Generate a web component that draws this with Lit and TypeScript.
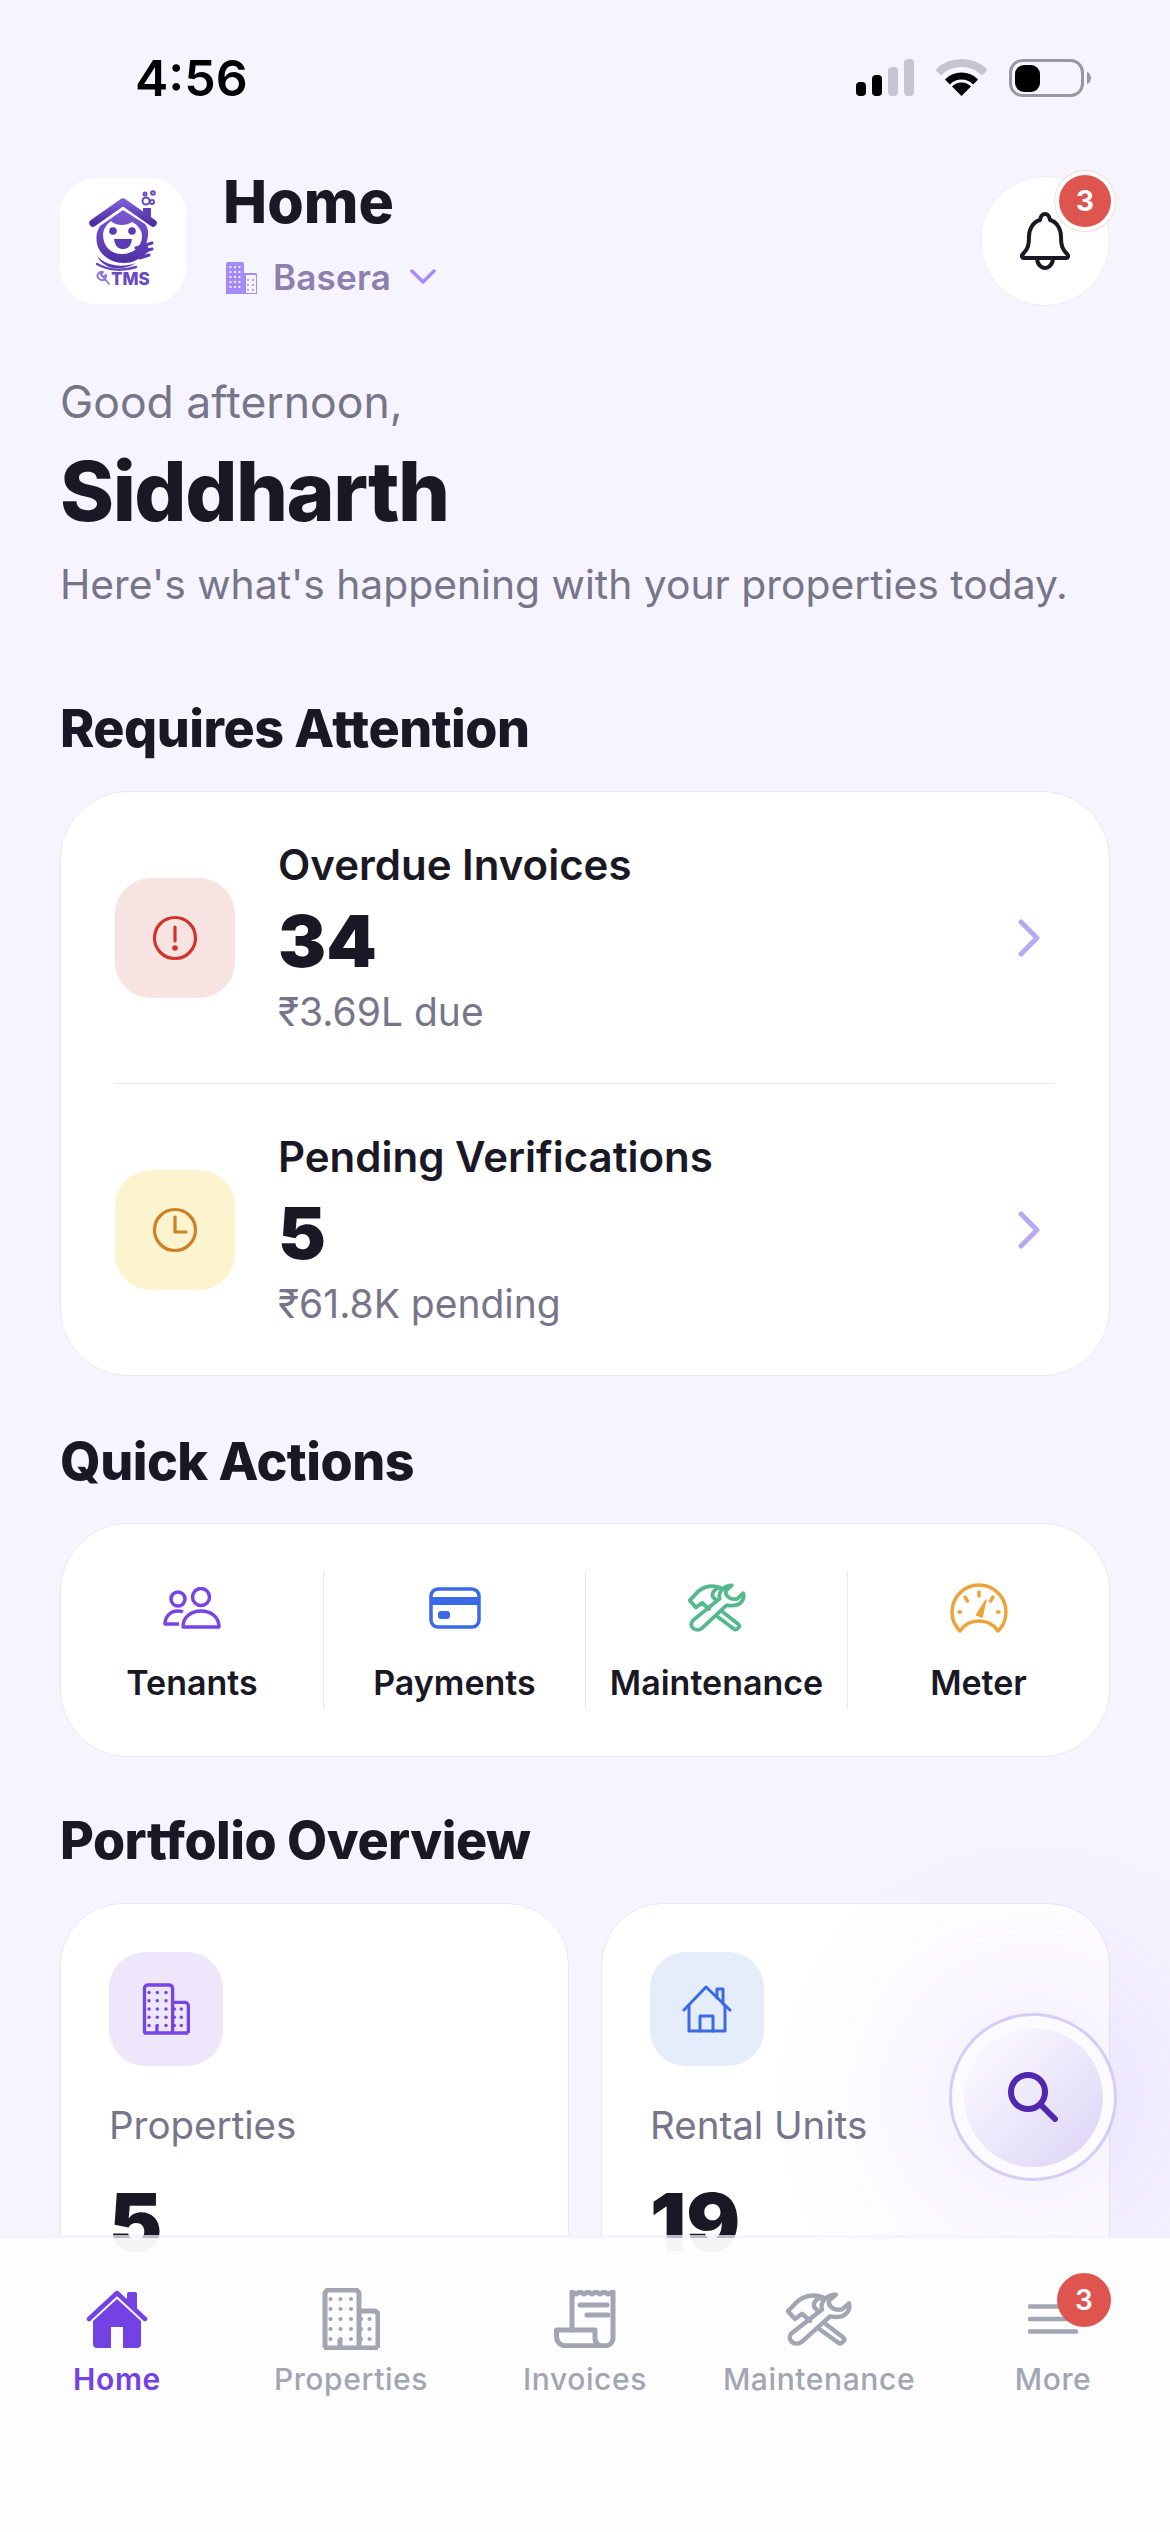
import { LitElement, html, css, svg } from "lit";
import { customElement } from "lit/decorators.js";

const buildingDots = (xs: number[], ys: number[]) =>
  ys.flatMap((y) => xs.map((x) => svg`<circle cx=${x} cy=${y} r="2.100" fill="currentColor" stroke="none"></circle>`));

const buildingIcon = (w: number, h: number, sw = 5) => html`<svg width=${w} height=${h} viewBox="0 0 58 62" fill="none" stroke="currentColor" stroke-width=${sw} stroke-linejoin="round">
  <path d="M3 60V6a4 4 0 0 1 4-4h26a4 4 0 0 1 4 4v54"></path>
  <path d="M37 23h15a4 4 0 0 1 4 4v33"></path>
  <path d="M2 60h54"></path><path d="M18 51v9"></path>
  ${buildingDots([8.5, 18.5, 29], [11, 21, 31, 41, 51])}
  ${buildingDots([39, 47.5], [31, 41, 51])}
</svg>`;

const toolsIcon = (w: number, h: number, sw = 4.2) => html`<svg width=${w} height=${h} viewBox="0 0 66 62" preserveAspectRatio="none" fill="none" stroke="currentColor" stroke-linejoin="round" stroke-linecap="round">
  <g stroke-width=${sw}>
  <path vector-effect="non-scaling-stroke" d="M36 20C34 12 40 3 50 3L43 10C42 16 48 22 56 20L63 13C65 24 57 31 44 28L16 57C13 60 8 60 5.500 57C3 54 3 50 6 47Z"></path>
  <path vector-effect="non-scaling-stroke" d="M40 37L57 52C59 54 59 55 57 57C55 59 54 60 52 58L34 43"></path>
  <path vector-effect="non-scaling-stroke" d="M24 33L16 25L9 31L2 22L8 15C14 6 25 1 37 6C31 7 27 11 28 17L32 22"></path>
  </g>
</svg>`;

const chevron = html`<svg class="chev" width="26" height="40" viewBox="0 0 26 40" fill="none" stroke="#b9a9f2" stroke-width="5" stroke-linecap="round" stroke-linejoin="round"><path d="M5 4L21 20L5 36"></path></svg>`;

const logo = html`<svg width="126" height="126" viewBox="0 0 126 126">
  <defs><linearGradient id="lg" x1="0" y1="0" x2="0" y2="1"><stop offset="0" stop-color="#7d5bd6"></stop><stop offset="1" stop-color="#4f2ea3"></stop></linearGradient></defs>
  <path d="M83 42V30h8v16z" fill="#6240b8"></path>
  <g fill="none" stroke="#6a48c0" stroke-width="2"><circle cx="86" cy="23" r="3.500"></circle><circle cx="93" cy="15" r="1.800"></circle><circle cx="85" cy="16" r="1.500"></circle><circle cx="92" cy="24" r="2"></circle></g>
  <path d="M33 45L63 24L93 45" fill="none" stroke="url(#lg)" stroke-width="7.500" stroke-linecap="round" stroke-linejoin="round"></path>
  <path d="M63 32L40 48C36 54 36 60 37 66C40 78 52 85 64 85C74 85 82 80 90 72L86 66C88 60 90 52 85 46Z" fill="url(#lg)"></path>
  <path d="M43 56C44 50 47 46 51 43C56 48 66 48 72 44C78 47 82 52 82 58C82 68 74 76 62 76C50 76 43 68 43 56Z" fill="#fff"></path>
  <circle cx="53" cy="53" r="3.800" fill="#5b3ab3"></circle><circle cx="72" cy="53" r="3.800" fill="#5b3ab3"></circle>
  <path d="M54 61H72C71 69 67 71 63 71C59 71 55 69 54 61Z" fill="#5b3ab3"></path>
  <path d="M76 70L92 65M78 75L92 71M80 80L89 77" stroke="#5b3ab3" stroke-width="3" stroke-linecap="round"></path>
  <path d="M37 78C46 88 62 90 76 85C62 94 44 92 37 78Z" fill="#5b3ab3"></path>
  <path d="M37 86C49 93 64 93 76 89" stroke="#6a48c0" stroke-width="2.500" fill="none" stroke-linecap="round"></path>
  <path d="M40 95L49 106M38 100C36 96 40 93 43 94L41 97L43 99L46 97C47 100 44 103 41 102Z" fill="none" stroke="#8f74d8" stroke-width="1.800" stroke-linecap="round"></path>
  <text x="51" y="107" font-family="Inter, sans-serif" font-weight="800" font-size="17" fill="#6a48c0">TMS</text>
</svg>`;

@customElement("app-root")
export class AppRoot extends LitElement {
  static styles = css`
    :host { display: block; position: relative; width: 1170px; height: 2532px; overflow: hidden; background: #f6f4ff; color: #1a1825; font-family: Inter, "Noto Sans", sans-serif; }
    .status { display: flex; justify-content: space-between; align-items: flex-start; height: 125px; padding: 48px 79px 0 135px; }
    .time { font-size: 50px; line-height: 60px; font-weight: 600; color: #000; }
    .status-icons { display: flex; gap: 22px; margin-top: 11px; }
    .status-icons svg { display: block; }
    main { padding: 0 60px; }
    .header { display: flex; align-items: flex-start; }
    .logo { width: 126px; height: 126px; margin-top: 5px; border-radius: 36px; background: #fff; flex: none; }
    .logo svg { display: block; }
    .titles { margin-left: 39px; flex: 1; }
    h1 { margin: 0 0 0 -2px; font-size: 59px; line-height: 58px; font-weight: 800; letter-spacing: 0; }
    .site { display: flex; align-items: center; margin-top: 25px; height: 42px; color: #8e80ad; font-size: 35px; font-weight: 600; letter-spacing: 0.2px; }
    .site .bld { color: #a58bf7; margin-right: 16px; }
    .site .dn { margin-left: 19px; }
    .bell { position: relative; width: 130px; height: 130px; margin-top: 3px; border-radius: 50%; background: #fff; border: 1px solid #eeecf6; box-sizing: border-box; display: flex; align-items: center; justify-content: center; flex: none; }
    .badge { position: absolute; width: 52px; height: 52px; border-radius: 50%; background: #de5550; color: #fff; font-weight: 700; font-size: 28px; display: flex; align-items: center; justify-content: center; }
    .bell .badge { left: 78px; top: -2px; box-shadow: 0 0 0 4px #fff, 0 0 0 5px #f5dcdc; }
    .hello { margin: 71px 0 0; font-size: 44.5px; line-height: 50px; color: #77758a; }
    .name { margin: 15px 0 0; font-size: 82px; line-height: 100px; font-weight: 800; letter-spacing: -1.5px; }
    .lead { margin: 18px 0 0; font-size: 40.8px; line-height: 48px; color: #77758a; }
    h2 { margin: 0; font-size: 52px; line-height: 60px; font-weight: 800; letter-spacing: -0.5px; font-feature-settings: "calt" 0; }
    .h-req { margin-top: 91px; }
    .h-quick { margin-top: 56px; }
    .h-port { margin-top: 54px; }
    .card { background: #fff; border: 1px solid #e9e7f5; border-radius: 68px; box-sizing: border-box; }
    .attn { margin-top: 32px; height: 585px; display: flex; flex-direction: column; }
    .row { flex: 1; display: flex; align-items: center; margin: 0 54px; }
    .row:first-child { flex: 0 0 291px; }
    .row + .row { border-top: 1px solid #e9e8f0; }
    .tile { width: 120px; height: 120px; border-radius: 36px; display: flex; align-items: center; justify-content: center; flex: none; }
    .red { background: #f8e3e3; } .yellow { background: #fcf3cf; }
    .txt { flex: 1; margin-left: 43px; }
    .txt .t { font-size: 42px; line-height: 50px; font-weight: 600; }
    .num { font-size: 72px; line-height: 72px; font-weight: 900; }
    .txt .num { margin-top: 15px; }
    .txt .s { margin-top: 12px; font-size: 39px; line-height: 46px; color: #77758a; }
    .chev { margin-right: 13px; display: block; }
    .quick { margin-top: 31px; height: 234px; padding: 47px 0 0; display: grid; grid-template-columns: repeat(4, 1fr); }
    .cell { height: 138px; box-sizing: border-box; padding-top: 12px; display: flex; flex-direction: column; align-items: center; }
    .cell + .cell { border-left: 1px solid #e9e8f0; }
    .cell .ic { height: 49px; display: flex; align-items: center; justify-content: center; }
    .cell .ic.green { color: #55b98d; }
    .cell .ic svg { display: block; }
    .cell .l { margin-top: 31px; font-size: 34px; line-height: 40px; font-weight: 600; white-space: nowrap; }
    .port { margin-top: 32px; display: grid; grid-template-columns: 1fr 1fr; gap: 32px; }
    .stat { height: 600px; border-radius: 62px; padding: 48px; }
    .stile { width: 114px; height: 114px; border-radius: 36px; display: flex; align-items: center; justify-content: center; }
    .purple { background: #eee6fa; color: #7744e6; } .blue { background: #e5edfa; }
    .stat .l { margin-top: 36px; font-size: 38.5px; line-height: 46px; color: #77758a; }
    .stat .num { margin-top: 38px; font-size: 80px; }
    .fab { position: absolute; left: 949px; top: 2013px; width: 168px; height: 168px; padding: 0; box-sizing: border-box; border-radius: 50%; border: 3px solid #d6cdf6; background: #fbfaff; display: flex; align-items: center; justify-content: center; box-shadow: 0 0 150px 60px rgba(124, 82, 240, 0.09); }
    .fab .in { width: 139px; height: 139px; border-radius: 50%; background: linear-gradient(135deg, #f7f5fe 20%, #dcd3f6 100%); display: flex; align-items: center; justify-content: center; }
    .tabs { position: absolute; left: 0; right: 0; bottom: 0; height: 297px; box-sizing: border-box; border-top: 3px solid rgba(242, 239, 253, 0.75); background: rgba(253, 253, 254, 0.96); background-clip: padding-box; padding-top: 50px; display: grid; grid-template-columns: repeat(5, 1fr); align-items: start; }
    .tab { position: relative; display: flex; flex-direction: column; align-items: center; color: #a1a6b2; }
    .tab .ic { height: 62px; display: flex; align-items: center; justify-content: center; }
    .tab .ic svg { display: block; }
    .tab .l { margin-top: 11px; font-size: 30px; line-height: 36px; font-weight: 500; letter-spacing: 0.6px; }
    .tab.on { color: #7341e4; }
    .tab.on .l { font-weight: 600; }
    .tab .badge { left: 121px; top: -15px; width: 54px; height: 54px; font-size: 28px; font-weight: 600; }
  `;

  render() {
    return html`
      <div class="status">
        <span class="time">4:56</span>
        <div class="status-icons">
          <svg width="58" height="37" viewBox="0 0 58 37"><rect x="0" y="23" width="10" height="14" rx="4" fill="#000"></rect><rect x="16" y="16" width="10" height="21" rx="4" fill="#000"></rect><rect x="32" y="8" width="10" height="29" rx="4" fill="#c6c4d0"></rect><rect x="48" y="0" width="10" height="37" rx="4" fill="#c6c4d0"></rect></svg>
          <svg width="51" height="37" viewBox="0 0 51 37" fill="none"><path d="M2.200 13.700A33 33 0 0 1 48.800 13.700" stroke="#c6c4d0" stroke-width="8"></path><path d="M11.400 22.900A20 20 0 0 1 39.600 22.900" stroke="#000" stroke-width="7"></path><path d="M25.500 37L16 27.500A13.400 13.400 0 0 1 35 27.500Z" fill="#000"></path></svg>
          <svg width="82" height="38" viewBox="0 0 82 38"><rect x="1.500" y="1.500" width="72" height="35" rx="12" fill="none" stroke="#99979f" stroke-width="3"></rect><rect x="6" y="6" width="25" height="27" rx="9" fill="#000"></rect><path d="M78 13C81 14 82 17 82 19C82 21 81 24 78 25Z" fill="#99979f"></path></svg>
        </div>
      </div>
      <main>
        <div class="header">
          <div class="logo">${logo}</div>
          <div class="titles">
            <h1>Home</h1>
            <div class="site">
              <span class="bld"><svg style="display:block" width="32" height="33" viewBox="0 0 32 33"><path d="M1 3a2 2 0 0 1 2-2h14a2 2 0 0 1 2 2v30H1z" fill="currentColor"></path><path d="M20 13h10a2 2 0 0 1 2 2v18H20z" fill="none" stroke="currentColor" stroke-width="2"></path><g fill="#fff">${[5.5, 10, 14.5].flatMap((x) => [6, 11, 16, 21, 26].map((y) => svg`<circle cx=${x} cy=${y} r="1.100"></circle>`))}</g>${[23, 28].flatMap((x) => [19, 24, 29].map((y) => svg`<circle cx=${x} cy=${y} r="1.100" fill="currentColor"></circle>`))}</svg></span>
              Basera
              <svg class="dn" width="26" height="16" viewBox="0 0 26 16" fill="none" stroke="#a58bf7" stroke-width="3.500" stroke-linecap="round" stroke-linejoin="round"><path d="M2 2L13 13L24 2"></path></svg>
            </div>
          </div>
          <div class="bell">
            <svg width="50" height="58" viewBox="0 0 50 58" fill="none" stroke="#1a1825" stroke-width="4" stroke-linejoin="round"><path d="M25 2C28 2 29.500 5 30 8C37 10 41 17 41 25C41 33 42 37 47 42C49 44 48 46 46 46H4C2 46 1 44 3 42C8 37 9 33 9 25C9 17 13 10 20 8C20.500 5 22 2 25 2Z"></path><path d="M17 46C17 52 21 56 25 56C29 56 33 52 33 46"></path></svg>
            <span class="badge">3</span>
          </div>
        </div>
        <p class="hello">Good afternoon,</p>
        <p class="name">Siddharth</p>
        <p class="lead">Here's what's happening with your properties today.</p>

        <h2 class="h-req">Requires Attention</h2>
        <section class="card attn">
          <div class="row">
            <div class="tile red"><svg width="46" height="46" viewBox="0 0 46 46" fill="none" stroke="#d0342c" stroke-width="3.200" stroke-linecap="round"><circle cx="23" cy="23" r="20.500"></circle><path d="M23 12V26"></path><circle cx="23" cy="33" r="1.200" fill="#d0342c"></circle></svg></div>
            <div class="txt"><div class="t">Overdue Invoices</div><div class="num">34</div><div class="s">₹3.69L due</div></div>
            ${chevron}
          </div>
          <div class="row">
            <div class="tile yellow"><svg width="46" height="46" viewBox="0 0 46 46" fill="none" stroke="#cf7f24" stroke-width="3.200" stroke-linecap="round" stroke-linejoin="round"><circle cx="23" cy="23" r="20.500"></circle><path d="M23 10V25H34"></path></svg></div>
            <div class="txt"><div class="t">Pending Verifications</div><div class="num">5</div><div class="s">₹61.8K pending</div></div>
            ${chevron}
          </div>
        </section>

        <h2 class="h-quick">Quick Actions</h2>
        <section class="card quick">
          <div class="cell"><div class="ic"><svg width="58" height="42" viewBox="0 0 58 42" fill="none" stroke="#7744e6" stroke-width="3.500" stroke-linejoin="round"><circle cx="38" cy="10" r="8.500"></circle><circle cx="15" cy="12" r="7"></circle><path d="M20 40C20 30 28 24 38 24C48 24 56 30 56 40Z"></path><path d="M20 25C18 24 17 24 15 24C7 24 2 30 2 37H16"></path></svg></div><div class="l">Tenants</div></div>
          <div class="cell"><div class="ic"><svg width="52" height="42" viewBox="0 0 52 42" fill="none"><rect x="2" y="2" width="48" height="38" rx="7" stroke="#3a6ae6" stroke-width="3.500"></rect><rect x="2" y="10" width="48" height="8" fill="#3a6ae6"></rect><rect x="9" y="24" width="12" height="8" rx="3" fill="#3a6ae6"></rect></svg></div><div class="l">Payments</div></div>
          <div class="cell"><div class="ic green">${toolsIcon(58, 49, 3.8)}</div><div class="l">Maintenance</div></div>
          <div class="cell"><div class="ic"><svg width="58" height="50" viewBox="0 0 58 50" fill="none" stroke="#eea33a" stroke-width="3.500" stroke-linecap="round" stroke-linejoin="round"><path d="M10 48C4 42 2 35 2 29A27 27 0 0 1 56 29C56 35 54 42 48 48C44 42 37 38 29 38C21 38 14 42 10 48Z"></path><path d="M29 9V13M15 14L17.500 18M43 14L40.500 18M9 29H10.500M47.500 29H49"></path><path d="M26.500 32L36 17L32 34Z" fill="#eea33a" stroke-width="1.500"></path></svg></div><div class="l">Meter</div></div>
        </section>

        <h2 class="h-port">Portfolio Overview</h2>
        <div class="port">
          <section class="card stat">
            <div class="stile purple">${buildingIcon(48, 52, 4)}</div>
            <div class="l">Properties</div><div class="num">5</div>
          </section>
          <section class="card stat">
            <div class="stile blue"><svg width="50" height="48" viewBox="0 0 50 48" fill="none" stroke="#3a6ae6" stroke-width="3" stroke-linejoin="round" stroke-linecap="round"><path d="M2 25L24 2L48 25"></path><path d="M35 13V4H41V19"></path><path d="M7 21V46H43V21"></path><path d="M18 46V31H31V46"></path></svg></div>
            <div class="l">Rental Units</div><div class="num">19</div>
          </section>
        </div>
      </main>

      <button class="fab" aria-label="Search"><span class="in"><svg width="50" height="50" viewBox="0 0 50 50" fill="none" stroke="#5227b0" stroke-width="6" stroke-linecap="round"><circle cx="20" cy="20" r="17"></circle><path d="M33 33L47 47"></path></svg></span></button>

      <nav class="tabs">
        <div class="tab on"><div class="ic"><svg width="62" height="58" viewBox="0 0 62 58"><path d="M7 31L31 9L55 31V54a4 4 0 0 1-4 4H37V37H25V58H11a4 4 0 0 1-4-4Z" fill="currentColor"></path><path d="M3 29L31 3L59 29" fill="none" stroke="currentColor" stroke-width="4.500" stroke-linecap="round" stroke-linejoin="round"></path><path d="M41 10V4a2 2 0 0 1 2-2h6a2 2 0 0 1 2 2V20Z" fill="currentColor"></path></svg></div><div class="l">Home</div></div>
        <div class="tab"><div class="ic">${buildingIcon(58, 62)}</div><div class="l">Properties</div></div>
        <div class="tab"><div class="ic"><svg width="62" height="58" viewBox="0 0 62 58" fill="none" stroke="currentColor" stroke-width="5" stroke-linecap="round" stroke-linejoin="round"><path d="M18 40V2L22 4L26 2L30 4L34 2L38 4L42 2L46 4L50 2L54 4L59 2V48C59 53 55 56 50 56H13"></path><path d="M2.500 40H41V48C41 53 44 56 50 56H13C6 56 2.500 52 2.500 46Z"></path><path d="M26 15H53M33 25H54"></path></svg></div><div class="l">Invoices</div></div>
        <div class="tab"><div class="ic">${toolsIcon(66, 54, 4.4)}</div><div class="l">Maintenance</div></div>
        <div class="tab"><div class="ic"><svg width="50" height="30" viewBox="0 0 50 30" fill="none" stroke="currentColor" stroke-width="4.500" stroke-linecap="round"><path d="M2 2.500H48M2 15H48M2 27.500H48"></path></svg></div><div class="l">More</div><span class="badge">3</span></div>
      </nav>
    `;
  }
}
